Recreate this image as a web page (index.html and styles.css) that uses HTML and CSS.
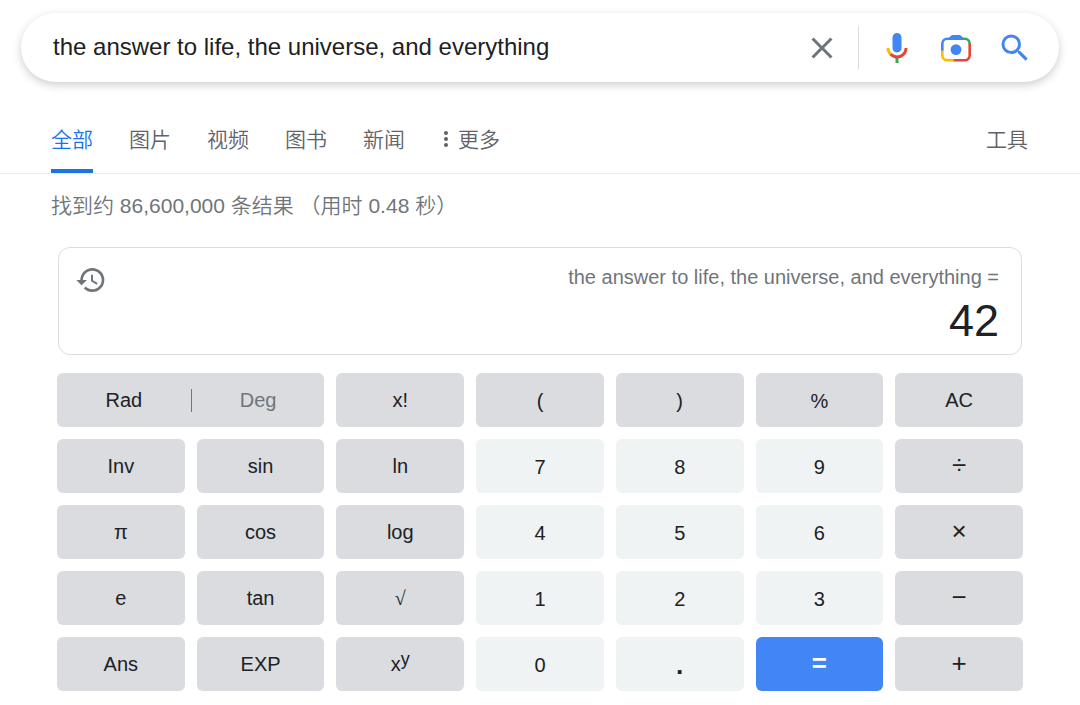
FILE: index.html
```html
<!DOCTYPE html>
<html lang="zh-CN">
<head>
    <meta charset="UTF-8">
    <meta name="viewport" content="width=device-width, initial-scale=1.0">
    <title>the answer to life, the universe, and everything</title>
    <link rel="stylesheet" href="styles.css">
</head>
<body>
    <header>
        <form class="search-box">
            <input class="search-input" type="text" value="the answer to life, the universe, and everything" aria-label="搜索">
            <button class="icon-btn clear-btn" type="button" aria-label="清除">
                <svg viewBox="0 0 24 24" fill="#70757a"><path d="M19 6.41L17.59 5 12 10.59 6.41 5 5 6.41 10.59 12 5 17.59 6.41 19 12 13.41 17.59 19 19 17.59 13.41 12z"/></svg>
            </button>
            <span class="separator"></span>
            <button class="icon-btn" type="button" aria-label="语音搜索">
                <svg viewBox="0 0 24 24">
                    <path fill="#4285f4" d="M12 15c1.66 0 3-1.31 3-2.97V5.01C15 3.35 13.66 2 12 2S9 3.34 9 5.01v7.02C9 13.69 10.34 15 12 15z"/>
                    <path fill="#34a853" d="M11 18.08h2V22h-2z"/>
                    <path fill="#fbbc05" d="M7.05 16.87C5.78 15.54 5 14.04 5 12h2c0 1.45.56 2.42 1.47 3.38v.32l-1.15 1.18z"/>
                    <path fill="#ea4335" d="M12 16.93a4.97 5.25 0 0 1-3.54-1.55l-1.41 1.49C8.31 18.21 10.07 19 12 19c3.87 0 6.99-2.92 6.99-7H17c0 2.92-2.24 4.93-5 4.93z"/>
                </svg>
            </button>
            <button class="icon-btn" type="button" aria-label="图片搜索">
                <svg viewBox="0 0 36 36" fill="none" stroke-width="2.6">
                    <path stroke="#34a853" d="M23 8.800h3.700a5 5 0 0 1 5 5v.7"/>
                    <path stroke="#ea4335" d="M31.700 13.500V25.300a5 5 0 0 1-5 5H15"/>
                    <path stroke="#fbbc05" d="M4.300 19V25.300a5 5 0 0 0 5 5h6.500"/>
                    <path stroke="#4285f4" d="M4.300 20.500V13.800a5 5 0 0 1 5-5H25"/>
                    <path fill="#4285f4" d="M10.500 8.500l2.400-2.700q.9-.9 2-.9h6.200q1.100 0 2 .9l2.400 2.700v1.600h-15z"/>
                    <circle fill="#4285f4" cx="18" cy="19.600" r="5.400"/>
                </svg>
            </button>
            <button class="icon-btn" type="submit" aria-label="Google 搜索">
                <svg viewBox="0 0 24 24" fill="#4285f4"><path d="M15.500 14h-.79l-.28-.27A6.470 6.470 0 0 0 16 9.500 6.500 6.500 0 1 0 9.500 16c1.610 0 3.090-.59 4.230-1.570l.27.28v.79l5 4.990L20.490 19l-4.990-5zm-6 0C7.010 14 5 11.990 5 9.500S7.010 5 9.500 5 14 7.010 14 9.500 11.990 14 9.500 14z"/></svg>
            </button>
        </form>

        <nav class="tabs">
            <a class="tab active" href="#">全部</a>
            <a class="tab" href="#">图片</a>
            <a class="tab" href="#">视频</a>
            <a class="tab" href="#">图书</a>
            <a class="tab" href="#">新闻</a>
            <a class="tab more" href="#">
                <svg viewBox="0 0 6 18" fill="#5f6368"><circle cx="3" cy="3" r="2"/><circle cx="3" cy="9" r="2"/><circle cx="3" cy="15" r="2"/></svg>
                更多
            </a>
            <a class="tab tools" href="#">工具</a>
        </nav>
    </header>

    <main>
        <p class="stats">找到约 86,600,000 条结果 （用时 0.48 秒）</p>

        <section class="calculator">
            <div class="display">
                <button class="history-btn" type="button" aria-label="历史记录">
                    <svg viewBox="0 0 24 24" fill="#70757a"><path d="M13 3a9 9 0 0 0-9 9H1l3.890 3.890.07.14L9 12H6c0-3.870 3.130-7 7-7s7 3.130 7 7-3.130 7-7 7c-1.930 0-3.680-.79-4.940-2.060l-1.420 1.420A8.954 8.954 0 0 0 13 21a9 9 0 0 0 0-18zm-1 5v5l4.280 2.540.72-1.210-3.500-2.080V8H12z"/></svg>
                </button>
                <div class="expression">the answer to life, the universe, and everything =</div>
                <div class="result">42</div>
            </div>

            <div class="keys">
                <div class="key angle">
                    <button type="button">Rad</button>
                    <button class="off" type="button">Deg</button>
                </div>
                <button class="key" type="button">x!</button>
                <button class="key sym" type="button">(</button>
                <button class="key sym" type="button">)</button>
                <button class="key sym" type="button">%</button>
                <button class="key" type="button">AC</button>

                <button class="key" type="button">Inv</button>
                <button class="key" type="button">sin</button>
                <button class="key" type="button">ln</button>
                <button class="key num" type="button">7</button>
                <button class="key num" type="button">8</button>
                <button class="key num" type="button">9</button>
                <button class="key op" type="button">÷</button>

                <button class="key" type="button">π</button>
                <button class="key" type="button">cos</button>
                <button class="key" type="button">log</button>
                <button class="key num" type="button">4</button>
                <button class="key num" type="button">5</button>
                <button class="key num" type="button">6</button>
                <button class="key op" type="button">×</button>

                <button class="key" type="button">e</button>
                <button class="key" type="button">tan</button>
                <button class="key root" type="button">√</button>
                <button class="key num" type="button">1</button>
                <button class="key num" type="button">2</button>
                <button class="key num" type="button">3</button>
                <button class="key op" type="button">−</button>

                <button class="key" type="button">Ans</button>
                <button class="key" type="button">EXP</button>
                <button class="key" type="button">x<sup>y</sup></button>
                <button class="key num" type="button">0</button>
                <button class="key num dot" type="button">.</button>
                <button class="key op equals" type="button">=</button>
                <button class="key op" type="button">+</button>
            </div>
        </section>
    </main>
</body>
</html>
```
FILE: styles.css
```css
* {
    margin: 0;
    padding: 0;
    box-sizing: border-box;
}

body {
    background-color: #fff;
    color: #202124;
    font-family: "Liberation Sans", Arial, "Noto Sans CJK SC", sans-serif;
    font-size: 21px;
}

button {
    border: none;
    background: none;
    color: inherit;
    font: inherit;
    cursor: pointer;
}

svg {
    display: block;
}

/* Search box */
.search-box {
    display: flex;
    align-items: center;
    height: 69px;
    margin: 13px 21px 0;
    padding: 0 26px 0 32px;
    border-radius: 35px;
    box-shadow: 0 3px 9px rgba(32, 33, 36, 0.22);
}

.search-input {
    flex: 1;
    min-width: 0;
    padding-bottom: 2px;
    border: none;
    outline: none;
    background: none;
    color: #202124;
    font-family: inherit;
    font-size: 24px;
}

.icon-btn {
    width: 36px;
    margin-left: 23px;
}

.clear-btn {
    margin-left: 0;
}

.separator {
    width: 1px;
    height: 43px;
    margin: 0 -3px 0 18px;
    background-color: #dadce0;
}

/* Tabs */
.tabs {
    display: flex;
    gap: 36px;
    height: 92px;
    padding: 32px 52px 0 51px;
    border-bottom: 1px solid #ebebeb;
}

.tab {
    padding-top: 10px;
    border-bottom: 4px solid transparent;
    color: #5f6368;
    font-weight: 350;
    line-height: 32px;
    text-decoration: none;
}

.tab.active {
    border-bottom-color: #1a73e8;
    color: #1a73e8;
}

.more {
    display: flex;
    gap: 9px;
    padding-left: 2px;
}

.more svg {
    width: 6px;
    height: 18px;
    margin-top: 6px;
}

.tools {
    margin-left: auto;
}

.stats {
    padding: 16px 51px;
    color: #70757a;
    font-weight: 350;
    line-height: 32px;
}

/* Calculator */
.calculator {
    padding: 9px 57px 14px;
    font-size: 20px;
}

.display {
    position: relative;
    height: 108px;
    margin: 0 1px;
    padding: 15px 22px 0;
    border: 1px solid #dadce0;
    border-radius: 12px;
    text-align: right;
}

.history-btn {
    position: absolute;
    top: 16px;
    left: 16px;
    width: 32px;
}

.expression {
    color: #70757a;
    line-height: 28px;
}

.result {
    font-size: 45px;
    line-height: 60px;
}

.keys {
    display: grid;
    grid-template-columns: repeat(7, 1fr);
    grid-auto-rows: 54px;
    gap: 12px;
    margin-top: 18px;
}

.key {
    border-radius: 6px;
    background-color: #dadce0;
}

.angle {
    display: grid;
    grid-column: span 2;
    grid-template-columns: 1fr 1fr;
    align-items: center;
}

.angle .off {
    border-left: 1px solid #70757a;
    color: #70757a;
}

.sym,
.num {
    padding-top: 2px;
}

.num {
    background-color: #eff3f4;
}

.op {
    padding-bottom: 2px;
    font-size: 26px;
}

.dot {
    font-size: 26px;
    font-weight: bold;
}

.equals {
    background-color: #4285f4;
    color: #fff;
    font-weight: bold;
}

.root {
    font-family: "Liberation Serif", serif;
}

.key sup {
    font-size: 18px;
    line-height: 0;
    vertical-align: 6px;
}
```
